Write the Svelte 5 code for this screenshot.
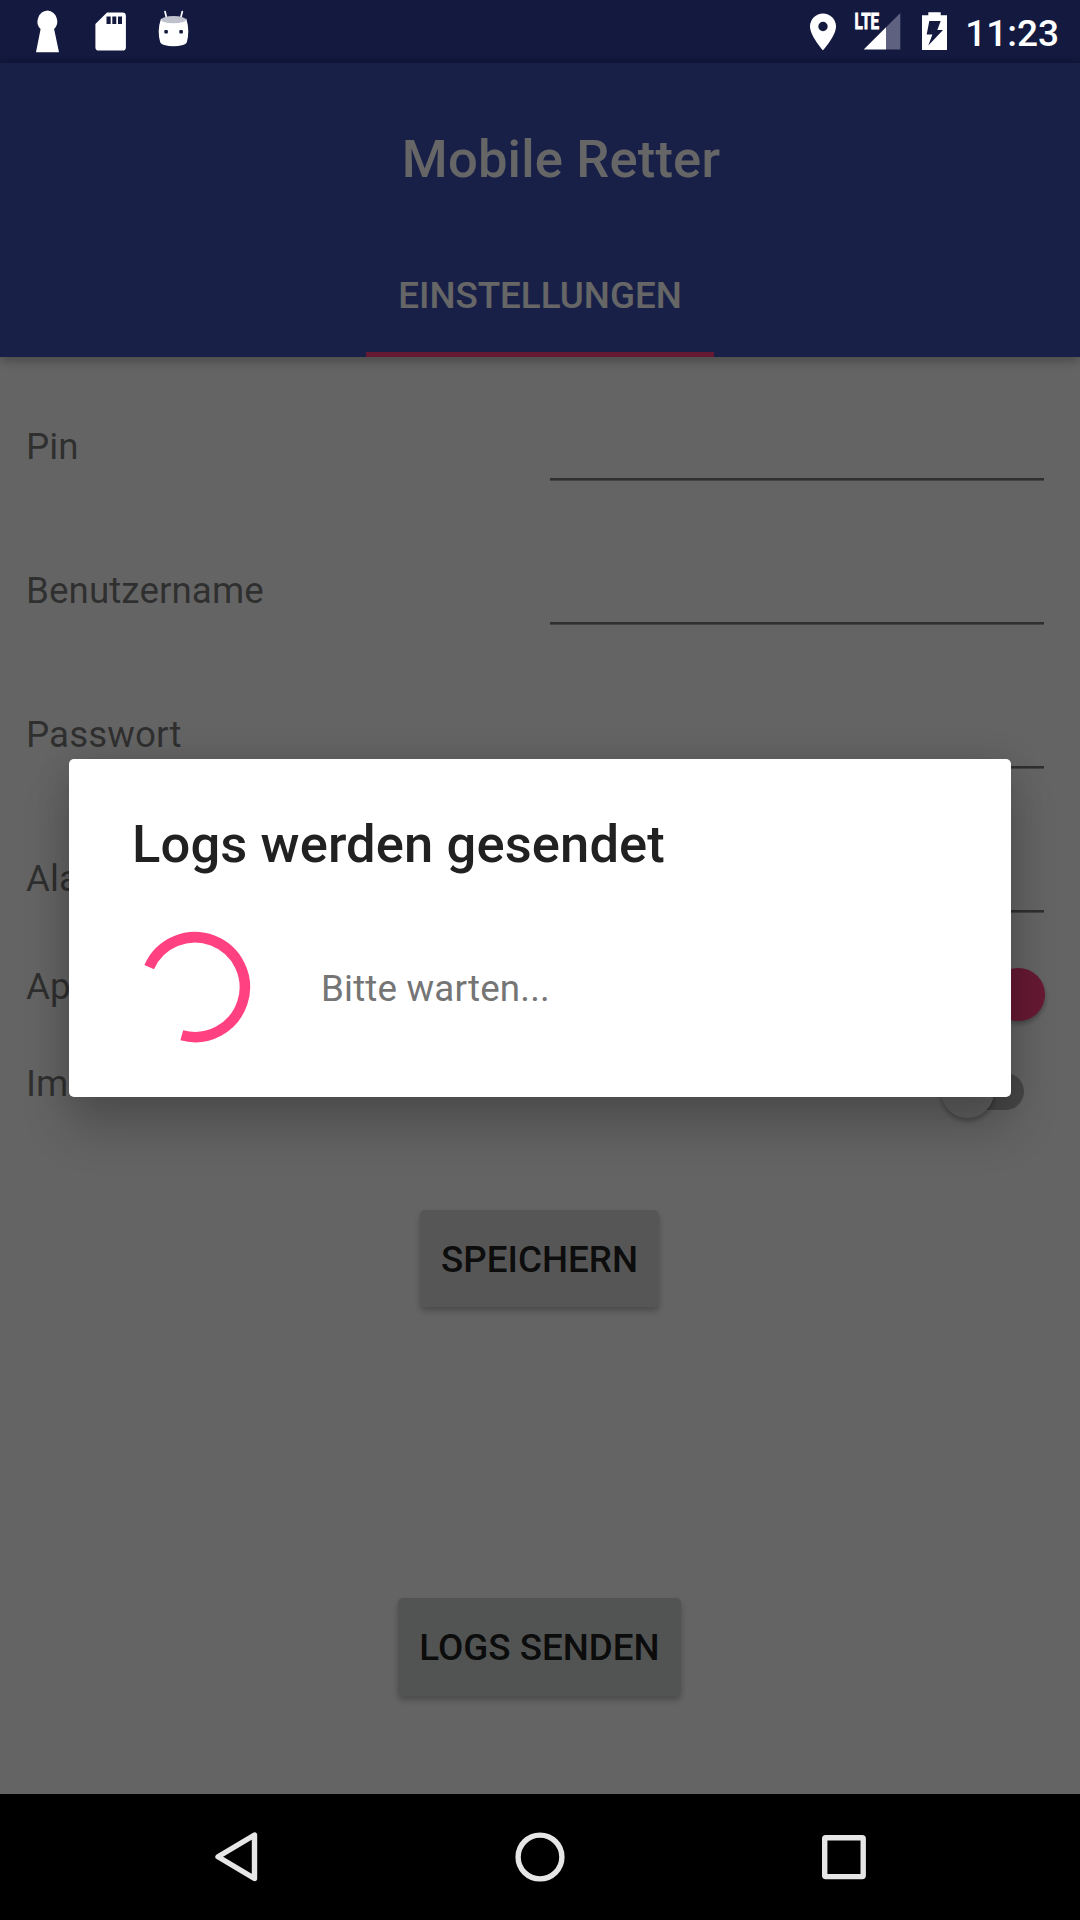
<script>
  const fields = ['Pin', 'Benutzername', 'Passwort', 'Ala'];
  const toggles = [
    { label: 'Ap', on: true },
    { label: 'Im', on: false },
  ];
</script>

<div class="screen">
  <div class="status-bg"></div>
  <header>
    <h1>Mobile Retter</h1>
    <div class="tab">EINSTELLUNGEN</div>
  </header>

  <main>
    {#each fields as label}
      <div class="field">
        <span class="label">{label}</span>
        <div class="input"></div>
      </div>
    {/each}
    <div class="toggles">
      {#each toggles as t}
        <div class="toggle">
          <span class="label">{t.label}</span>
          <div class="switch" class:on={t.on}><div class="thumb"></div></div>
        </div>
      {/each}
    </div>
    <button class="save">SPEICHERN</button>
    <button class="logs">LOGS SENDEN</button>
  </main>

  <nav>
    <svg viewBox="206 1827 60 60" width="60" height="60"><path d="M254.5 1835 V1878.5 L218 1856.8 Z" /></svg>
    <svg viewBox="510 1827 60 60" width="60" height="60"><circle cx="540" cy="1857" r="21.9" /></svg>
    <svg viewBox="814 1827 60 60" width="60" height="60"><rect x="824.7" y="1837.8" width="38.5" height="38.8" rx="1" /></svg>
  </nav>

  <div class="scrim"></div>

  <div class="status">
    <svg viewBox="16 0 63 63" width="63" height="63">
      <path d="M47.5 10.5 a11 11 0 0 1 6.6 18.6 L59 52.3 H36 L40.6 29.1 A11 11 0 0 1 47.5 10.5 Z" />
    </svg>
    <svg viewBox="79 0 63 63" width="63" height="63">
      <path fill-rule="evenodd" d="M107 12.5 H122.5 a3.4 3.4 0 0 1 3.4 3.4 V47.2 a3.4 3.4 0 0 1 -3.4 3.4 H98.8 a3.4 3.4 0 0 1 -3.4 -3.4 V24 Z M106.5 16.5 V24 H110.7 V16.5 Z M112.3 16.5 V24 H116.3 V16.5 Z M118 16.5 V24 H122 V16.5 Z" />
    </svg>
    <svg viewBox="142 0 63 63" width="63" height="63">
      <path d="M165 11.5 L166.6 18 M182.3 11.5 L180.7 18" stroke="#fff" stroke-width="1.7" stroke-linecap="round" />
      <path d="M161 18.5 Q173.5 27 186.3 18.5 Q190 31 186.8 42.5 Q185.8 44.4 183 45 Q173.5 47.7 164 45 Q161.2 44.4 160.3 42.5 Q156.8 31 161 18.5 Z" />
      <ellipse cx="173.6" cy="19.7" rx="12.4" ry="3.6" fill="#bfc1cc" />
      <rect class="hole" x="164.3" y="30" width="3.6" height="3.6" rx="1" />
      <rect class="hole" x="179.3" y="30" width="3.6" height="3.6" rx="1" />
    </svg>
    <span class="grow"></span>
    <svg viewBox="800 0 45 63" width="45" height="63">
      <path fill-rule="evenodd" d="M823 13.5 a13 13 0 0 1 13 13 C836 36 823 50.3 823 50.3 S810 36 810 26.5 A13 13 0 0 1 823 13.5 Z M823 21.8 a4.7 4.7 0 1 0 0 9.4 a4.7 4.7 0 0 0 0 -9.4 Z" />
    </svg>
    <svg viewBox="845 0 65 63" width="65" height="63">
      <text x="854.6" y="29.3" textLength="24.6" lengthAdjust="spacingAndGlyphs">LTE</text>
      <path d="M900.3 13 V49.5 H886 V27.3 Z" fill="#5e6180" />
      <path d="M886 27.3 V49.5 H863.7 Z" />
    </svg>
    <svg viewBox="910 0 50 63" width="50" height="63">
      <path d="M928.3 12.3 H940.7 V15.2 H947 V50 H922 V15.2 H928.3 Z" />
      <path class="hole" d="M929.3 21 H940.7 L937.3 30 H943 L928.3 45.6 L932.4 34.5 H926.7 Z" />
    </svg>
    <time>11:23</time>
  </div>

  <div class="dialog">
    <h2>Logs werden gesendet</h2>
    <div class="progress">
      <svg viewBox="135 927 120 120" width="120" height="120">
        <path d="M149.2 967.2 A49.9 49.9 0 1 1 181.8 1035.3" />
      </svg>
      <span>Bitte warten...</span>
    </div>
  </div>
</div>

<style>
  :global(body) { margin: 0; }
  .screen {
    position: relative;
    display: flex;
    flex-direction: column;
    width: 1080px;
    height: 1920px;
    overflow: hidden;
    background: #fafafa;
    font-family: Roboto, "Liberation Sans", sans-serif;
    font-size: 36.75px;
    line-height: 50px;
  }
  .status-bg { height: 63px; background: linear-gradient(#303f9f 88%, #2b3890); }
  header {
    z-index: 1;
    display: flex;
    flex-direction: column;
    align-items: center;
    height: 294px;
    background: #3f51b5;
    color: #fff;
    box-shadow: 0 4px 10px rgba(0, 0, 0, 0.27);
  }
  h1 {
    margin: 61px 0 0 42px;
    font-size: 52.5px;
    line-height: 70px;
    font-weight: 500;
    letter-spacing: 0.18px;
  }
  .tab {
    box-sizing: border-box;
    width: 348px;
    height: 99px;
    margin-top: auto;
    padding-top: 13px;
    border-bottom: 5px solid #ff4081;
    text-align: center;
    font-weight: 500;
  }
  main {
    flex: 1;
    display: flex;
    flex-direction: column;
    align-items: center;
    padding: 18px 36px 0 26px;
  }
  .field, .toggle {
    display: flex;
    align-items: center;
    justify-content: space-between;
    align-self: stretch;
    flex: none;
  }
  .field { height: 144px; }
  .toggles { align-self: stretch; margin: -14px 0 14px; }
  .toggle { height: 97px; }
  .toggle .label { padding-top: 2px; }
  .label { color: rgba(0, 0, 0, 0.54); letter-spacing: 0.08px; }
  .input {
    box-sizing: border-box;
    width: 494px;
    height: 66px;
    border-bottom: 2px solid #757575;
    box-shadow: 0 1px #ababab;
  }
  .switch {
    display: flex;
    align-items: center;
    box-sizing: border-box;
    width: 72px;
    height: 37px;
    margin: 17px 20px 0 0;
    border-radius: 19px;
    background: #b2b2b2;
  }
  .thumb {
    flex: none;
    width: 53px;
    height: 53px;
    margin-left: -11px;
    border-radius: 50%;
    background: #f1f1f1;
    box-shadow: 0 3px 5px rgba(0, 0, 0, 0.3);
  }
  .on { background: #fc9fbd; }
  .on .thumb { margin-left: 40px; background: #ff4081; }
  button {
    flex: none;
    padding: 1px 0 0;
    border: 0;
    border-radius: 5px;
    color: rgba(0, 0, 0, 0.87);
    font: 500 36.75px/50px Roboto, sans-serif;
    box-shadow: 0 4px 6px rgba(0, 0, 0, 0.25);
  }
  .save { width: 239px; height: 97px; margin: 65px 0 0 9px; padding-top: 3px; background: #d6d7d7; }
  .logs { width: 283px; height: 98px; margin: 291px 0 0 9px; background: #cbd2d0; }
  nav {
    z-index: 3;
    display: flex;
    align-items: center;
    justify-content: center;
    gap: 244px;
    height: 126px;
    background: #000;
  }
  nav svg { fill: none; stroke: #e6e6e6; stroke-width: 5.4; stroke-linejoin: round; }
  .scrim { position: absolute; inset: 0; z-index: 2; background: rgba(0, 0, 0, 0.6); }
  .status {
    position: absolute;
    inset: 0 0 auto 0;
    z-index: 4;
    display: flex;
    height: 63px;
    padding: 0 21px 0 16px;
    fill: #fff;
    color: #fff;
  }
  .hole { fill: #13193f; }
  .grow { flex: 1; }
  .status text { font: 700 22.5px Roboto, sans-serif; stroke: #fff; stroke-width: 0.9; }
  time { width: 99px; margin-top: 9px; text-align: right; font-size: 37px; font-weight: 500; white-space: nowrap; }
  .dialog {
    position: absolute;
    left: 69px;
    top: 759px;
    z-index: 4;
    box-sizing: border-box;
    width: 942px;
    height: 338px;
    padding: 50px 63px 0;
    border-radius: 5px;
    background: #fff;
    box-shadow: 0 32px 48px rgba(0, 0, 0, 0.2), 0 0 34px rgba(0, 0, 0, 0.12);
  }
  h2 { margin: 0; font-size: 52.5px; line-height: 70px; font-weight: 500; letter-spacing: 0.12px; color: #212121; }
  .progress { display: flex; align-items: center; gap: 66px; margin: 48px 0 0 3px; color: #757575; }
  .progress span { padding-top: 3px; letter-spacing: 0.17px; }
  .progress path { fill: none; stroke: #ff4081; stroke-width: 10.5; }
</style>
